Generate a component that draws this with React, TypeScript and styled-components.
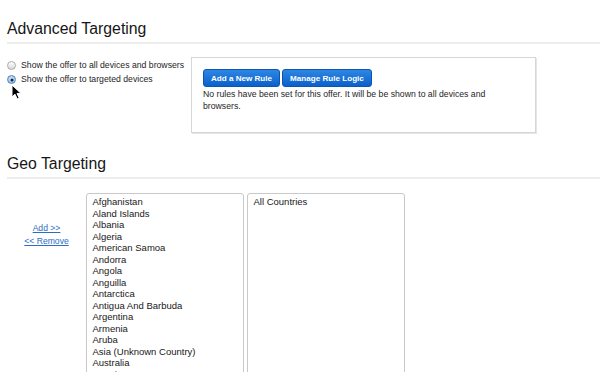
import styled, { createGlobalStyle, css } from "styled-components"

const GlobalStyle = createGlobalStyle`
  html, body {
    margin: 0;
    padding: 0;
    background: #fff;
    overflow: hidden;
  }
  body {
    font-family: "Liberation Sans", Arial, Helvetica, sans-serif;
    color: #1c1c1c;
  }
`

const Page = styled.div`
  position: relative;
  box-sizing: border-box;
  width: 600px;
  height: 372px;
  padding-left: 7px;
  overflow: hidden;
`

const SectionTitle = styled.h2<{ $gap: number }>`
  margin: ${props => props.$gap}px 0 0 0;
  padding: 0 0 3px 0;
  font-size: 15.8px;
  font-weight: normal;
  line-height: 20px;
  color: #161616;
  border-bottom: 2px solid #ededed;
`

const TargetRow = styled.div`
  display: flex;
  margin-top: 13px;
`

const RadioColumn = styled.div`
  width: 184px;
  padding-top: 1px;
`

const RadioRow = styled.label`
  display: flex;
  align-items: center;
  height: 14px;
  font-size: 8.7px;
  color: #1e1e1e;
  white-space: nowrap;
`

const RadioDot = styled.span<{ $checked: boolean }>`
  box-sizing: border-box;
  position: relative;
  width: 9px;
  height: 9px;
  margin: 1px 5px 0 0;
  border-radius: 50%;
  border: 1px solid #a9a9a9;
  background: linear-gradient(#ffffff, #d8d8d8);
  ${props => props.$checked && css`
    border-color: #5a86b8;
    background: radial-gradient(circle at 50% 40%, #d9ecfb, #7fb2e6);
    &::after {
      content: "";
      position: absolute;
      left: 50%;
      top: 50%;
      width: 3px;
      height: 3px;
      border-radius: 50%;
      background: #10243d;
      transform: translate(-50%, -50%);
    }
  `}
`

const RuleBox = styled.div`
  box-sizing: border-box;
  width: 345px;
  height: 76px;
  padding: 11px 11px 0 11px;
  border: 1px solid #d6d6d6;
  box-shadow: 1px 1px 0 #e6e6e6;
`

const ButtonBar = styled.div`
  display: flex;
  gap: 2px;
`

const BlueButton = styled.button<{ $width: number }>`
  box-sizing: border-box;
  width: ${props => props.$width}px;
  height: 18px;
  padding: 0;
  border: 1px solid #0b55b3;
  border-radius: 3px;
  background: linear-gradient(#2d87e4, #0b60ca);
  color: #fff;
  font-family: "Liberation Sans", Arial, sans-serif;
  font-size: 8.1px;
  font-weight: bold;
  cursor: pointer;
`

const RuleText = styled.p`
  margin: 2px 0 0 0;
  font-size: 8.7px;
  line-height: 11.7px;
  color: #1e1e1e;
`

const GeoRow = styled.div`
  display: flex;
  margin-top: 14px;
`

const LinkColumn = styled.div`
  width: 79px;
  padding-top: 29px;
  display: flex;
  flex-direction: column;
  align-items: center;
`

const MoveLink = styled.a`
  font-size: 8.6px;
  line-height: 12.6px;
  color: #2b6dc4;
  text-decoration: underline;
  cursor: pointer;
`

const Lists = styled.div`
  display: flex;
  gap: 3px;
`

const ListBox = styled.div`
  box-sizing: border-box;
  width: 158px;
  height: 200px;
  padding: 2px 5.5px;
  border: 1px solid #c9c9c9;
  border-radius: 3px;
  overflow: hidden;
`

const ListItem = styled.div`
  font-size: 9.5px;
  line-height: 11.52px;
  color: #181818;
  white-space: nowrap;
`

const Pointer = styled.svg`
  position: absolute;
  left: 11px;
  top: 84px;
`

const countries = [
  "Afghanistan",
  "Aland Islands",
  "Albania",
  "Algeria",
  "American Samoa",
  "Andorra",
  "Angola",
  "Anguilla",
  "Antarctica",
  "Antigua And Barbuda",
  "Argentina",
  "Armenia",
  "Aruba",
  "Asia (Unknown Country)",
  "Australia",
  "Austria",
  "Azerbaijan",
]

export default function App() {
  return (
    <>
      <GlobalStyle />
      <Page>
        <SectionTitle $gap={19}>Advanced Targeting</SectionTitle>
        <TargetRow>
          <RadioColumn>
            <RadioRow>
              <RadioDot $checked={false} />
              Show the offer to all devices and browsers
            </RadioRow>
            <RadioRow>
              <RadioDot $checked={true} />
              Show the offer to targeted devices
            </RadioRow>
          </RadioColumn>
          <RuleBox>
            <ButtonBar>
              <BlueButton $width={77}>Add a New Rule</BlueButton>
              <BlueButton $width={90}>Manage Rule Logic</BlueButton>
            </ButtonBar>
            <RuleText>
              No rules have been set for this offer. It will be be shown to all devices and browsers.
            </RuleText>
          </RuleBox>
        </TargetRow>

        <SectionTitle $gap={21}>Geo Targeting</SectionTitle>
        <GeoRow>
          <LinkColumn>
            <MoveLink>Add &gt;&gt;</MoveLink>
            <MoveLink>&lt;&lt; Remove</MoveLink>
          </LinkColumn>
          <Lists>
            <ListBox>
              {countries.map(name => (
                <ListItem key={name}>{name}</ListItem>
              ))}
            </ListBox>
            <ListBox>
              <ListItem>All Countries</ListItem>
            </ListBox>
          </Lists>
        </GeoRow>

        <Pointer width="11" height="16" viewBox="0 0 11 16">
          <path
            d="M1 1 L1 13 L4 10.2 L6.2 15 L8.2 14.1 L6 9.4 L10 9.4 Z"
            fill="#000"
            stroke="#fff"
            strokeWidth="1"
            strokeLinejoin="round"
          />
        </Pointer>
      </Page>
    </>
  )
}
